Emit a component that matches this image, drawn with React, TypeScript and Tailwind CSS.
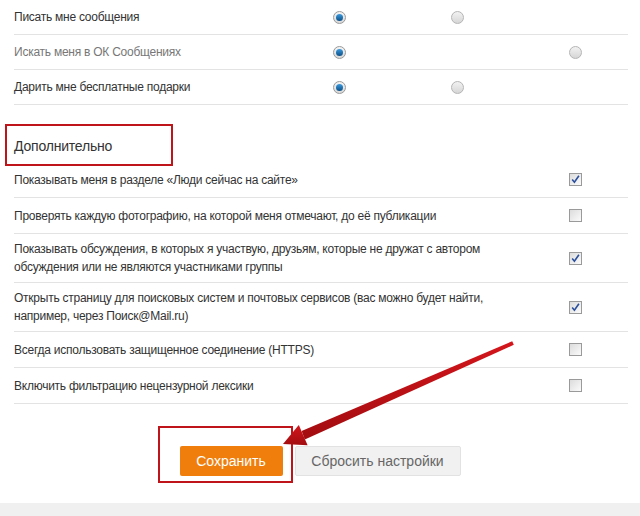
import React from "react";

function RadioOn() {
  return (
    <span className="flex h-[13px] w-[13px] items-center justify-center rounded-full border border-[#9a9a9a] bg-gradient-to-b from-[#f4f4f4] to-[#d8d8d8]">
      <span className="h-[7px] w-[7px] rounded-full bg-gradient-to-b from-[#3b9be0] to-[#0b4f86]" />
    </span>
  );
}

function RadioOff() {
  return (
    <span className="block h-[13px] w-[13px] rounded-full border border-[#b5b5b5] bg-gradient-to-b from-[#f2f2f2] to-[#d6d6d6]" />
  );
}

function Check({ on }: { on: boolean }) {
  return (
    <span className="flex h-[13px] w-[13px] items-center justify-center border border-[#9a9a9a] bg-gradient-to-br from-[#dcdcdc] to-[#fbfbfb]">
      {on && (
        <svg width="9" height="9" viewBox="0 0 9 9">
          <path d="M1.2 4.6 L3.4 7.2 L7.9 0.8" fill="none" stroke="#2a4f9c" strokeWidth="1.6" />
        </svg>
      )}
    </span>
  );
}

const radioRows = [
  { label: "Писать мне сообщения", col: 2, gray: false },
  { label: "Искать меня в ОК Сообщениях", col: 3, gray: true },
  { label: "Дарить мне бесплатные подарки", col: 2, gray: false },
];

const checkRows = [
  { label: "Показывать меня в разделе «Люди сейчас на сайте»", on: true },
  { label: "Проверять каждую фотографию, на которой меня отмечают, до её публикации", on: false },
  {
    label:
      "Показывать обсуждения, в которых я участвую, друзьям, которые не дружат с автором обсуждения или не являются участниками группы",
    on: true,
  },
  {
    label:
      "Открыть страницу для поисковых систем и почтовых сервисов (вас можно будет найти, например, через Поиск@Mail.ru)",
    on: true,
  },
  { label: "Всегда использовать защищенное соединение (HTTPS)", on: false },
  { label: "Включить фильтрацию нецензурной лексики", on: false },
];

export default function App() {
  return (
    <div
      className="relative h-[516px] w-[640px] overflow-hidden bg-white text-[12px] tracking-[-0.25px] text-[#333]"
      style={{ fontFamily: '"Liberation Sans", Arial, sans-serif' }}
    >
      <div className="pl-[14px] pr-[12px]">
        {radioRows.map((r, i) => (
          <div
            key={i}
            className="grid min-h-[35px] grid-cols-[319px_118px_118px_1fr] items-center border-b border-[#e3e3e3]"
          >
            <span className={r.gray ? "text-[#777]" : ""}>{r.label}</span>
            <span>
              <RadioOn />
            </span>
            <span>{r.col === 2 && <RadioOff />}</span>
            <span>{r.col === 3 && <RadioOff />}</span>
          </div>
        ))}

        <div className="relative pb-[6px] pt-[31px] text-[14px] leading-[20px] tracking-[-0.2px] text-[#333]">
          Дополнительно
          <div className="absolute left-[-9px] top-[19px] h-[42px] w-[168px] border-2 border-[#c0141b]" />
        </div>

        {checkRows.map((r, i) => (
          <div
            key={i}
            className="grid min-h-[36px] grid-cols-[555px_13px] items-center border-b border-[#e3e3e3] py-[6px] leading-[18px]"
          >
            <span className="max-w-[500px]">{r.label}</span>
            <Check on={r.on} />
          </div>
        ))}
      </div>

      <div className="mt-[42px] flex justify-center gap-[12px] tracking-normal">
        <div className="relative">
          <button className="h-[30px] w-[103px] rounded-[2px] bg-[#f07e0c] text-[14px] text-white">
            Сохранить
          </button>
          <div className="absolute left-[-22px] top-[-20px] h-[57px] w-[135px] border-2 border-[#c0141b]" />
        </div>
        <button className="h-[30px] w-[166px] rounded-[2px] border border-[#e2e2e2] bg-[#f1f1f1] text-[14px] text-[#666]">
          Сбросить настройки
        </button>
      </div>

      <div className="absolute bottom-0 left-0 h-[13px] w-full bg-[#f0f0f0]" />

      <svg className="pointer-events-none absolute left-0 top-0" width="640" height="516">
        <defs>
          <linearGradient id="ag" x1="0" y1="0" x2="0" y2="1">
            <stop offset="0" stopColor="#d4161c" />
            <stop offset="1" stopColor="#a20c10" />
          </linearGradient>
        </defs>
        <polygon
          points="512.2,341.2 513.8,344.8 304.8,439.5 301.6,431.1"
          fill="url(#ag)"
        />
        <polygon points="283,444 298.8,425.1 307.6,445.3" fill="url(#ag)" />
      </svg>
    </div>
  );
}
